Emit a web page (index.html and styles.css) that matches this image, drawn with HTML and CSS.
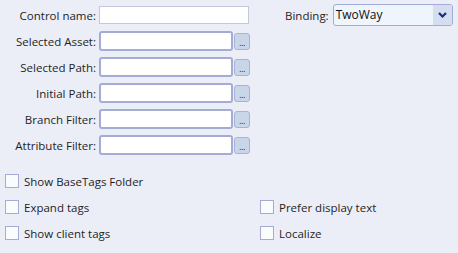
FILE: index.html
```html
<!DOCTYPE html>
<html lang="en">
<head>
  <meta charset="UTF-8">
  <title>Tag Browser Properties</title>
  <link rel="stylesheet" href="styles.css">
</head>
<body>
  <div class="panel">
    <div class="top-row">
      <div class="field">
        <label class="field-label">Control name:</label>
        <input type="text" class="name-input">
      </div>
      <div class="binding">
        <label class="binding-label">Binding:</label>
        <div class="select">
          <span class="select-value">TwoWay</span>
          <span class="select-arrow">
            <svg width="9" height="6" viewBox="0 0 9 6"><path d="M1 1 L4.5 4.5 L8 1" fill="none" stroke="#1c2a8a" stroke-width="2.2"/></svg>
          </span>
        </div>
      </div>
    </div>

    <div class="fields">
      <div class="field">
        <label class="field-label">Selected Asset:</label>
        <input type="text" class="path-input">
        <button class="browse">...</button>
      </div>
      <div class="field">
        <label class="field-label">Selected Path:</label>
        <input type="text" class="path-input">
        <button class="browse">...</button>
      </div>
      <div class="field">
        <label class="field-label">Initial Path:</label>
        <input type="text" class="path-input">
        <button class="browse">...</button>
      </div>
      <div class="field">
        <label class="field-label">Branch Filter:</label>
        <input type="text" class="path-input">
        <button class="browse">...</button>
      </div>
      <div class="field">
        <label class="field-label">Attribute Filter:</label>
        <input type="text" class="path-input">
        <button class="browse">...</button>
      </div>
    </div>

    <div class="options">
      <label class="check"><span class="box"></span>Show BaseTags Folder</label>
      <span></span>
      <label class="check"><span class="box"></span>Expand tags</label>
      <label class="check"><span class="box"></span>Prefer display text</label>
      <label class="check"><span class="box"></span>Show client tags</label>
      <label class="check"><span class="box"></span>Localize</label>
    </div>
  </div>
</body>
</html>
```

FILE: styles.css
```css
body {
  margin: 0;
  background: #eceef7;
  font-family: "Open Sans", "Noto Sans", sans-serif;
  font-size: 11.5px;
  color: #1e1e1e;
}

.panel {
  width: 458px;
  height: 253px;
  padding-top: 4px;
  box-sizing: border-box;
}

.top-row {
  display: flex;
  align-items: center;
  height: 22px;
}

.field {
  display: flex;
  align-items: center;
}

.field-label {
  width: 96px;
  margin-right: 3px;
  text-align: right;
  white-space: nowrap;
}

.name-input {
  width: 150px;
  height: 18px;
  box-sizing: border-box;
  border: 1px solid #c3c8dc;
  background: #fff;
  padding: 0 2px;
  margin: 0;
}

.binding {
  display: flex;
  align-items: center;
  margin-left: 36px;
}

.binding-label {
  margin-right: 4px;
}

.select {
  display: flex;
  width: 120px;
  height: 22px;
  box-sizing: border-box;
  border: 1px solid #a3acd8;
  border-radius: 3px;
  background: #eef5fd;
  overflow: hidden;
}

.select-value {
  flex: 1;
  padding-left: 2px;
  line-height: 20px;
  font-size: 12px;
  color: #111;
}

.select-arrow {
  width: 19px;
  display: flex;
  align-items: center;
  justify-content: center;
  background: #d5deee;
}

.fields {
  display: flex;
  flex-direction: column;
  gap: 6px;
  margin-top: 5px;
}

.fields .field {
  height: 20px;
}

.path-input {
  width: 134px;
  height: 20px;
  box-sizing: border-box;
  border: 2px solid #a4acd6;
  border-radius: 3px;
  background: #fff;
  margin: 0;
  padding: 0 2px;
}

.browse {
  width: 16px;
  height: 17px;
  margin: 1px 0 0 1px;
  padding: 5px 0 0;
  box-sizing: border-box;
  border: 1px solid #a6b3d6;
  border-radius: 3px;
  background: #c8d6e8;
  font-family: "DejaVu Sans", sans-serif;
  font-size: 8px;
  line-height: 8px;
  color: #2a2a5a;
  letter-spacing: -0.5px;
}

.options {
  display: grid;
  grid-template-columns: 255px 1fr;
  row-gap: 12px;
  margin-top: 19px;
  padding-left: 5px;
}

.check {
  display: flex;
  align-items: center;
  height: 14px;
  white-space: nowrap;
}

.box {
  width: 14px;
  height: 14px;
  box-sizing: border-box;
  border: 1px solid #a4acd6;
  background: #fafbfd;
  margin-right: 5px;
}
```
